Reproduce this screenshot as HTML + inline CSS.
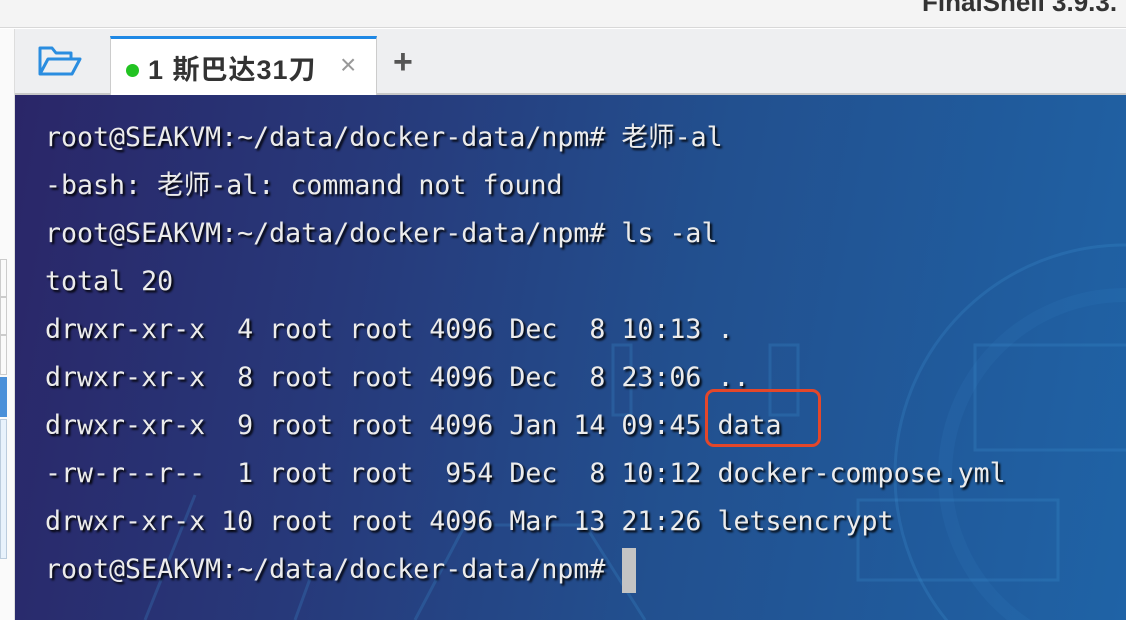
<!DOCTYPE html>
<html><head><meta charset="utf-8"><style>
*{margin:0;padding:0;box-sizing:border-box}
html,body{width:1126px;height:620px;overflow:hidden}
body{background:#fff;position:relative;font-family:"Liberation Sans","Noto Sans CJK SC",sans-serif}
.top{position:absolute;left:0;top:0;width:1126px;height:28px;background:#f4f4f4;border-bottom:1px solid #d8d8d8;overflow:hidden}
.top span{position:absolute;left:922px;top:-13px;font-size:26px;font-weight:bold;color:#333}
.tabbar{position:absolute;left:15px;top:29px;width:1111px;height:66px;background:#eeeff1;border-bottom:2px solid #c8c8c8}
.tab{position:absolute;left:95px;top:7px;width:267px;height:59px;background:#fff;border-top:3px solid #1e88e5;border-left:1px solid #ccc;border-right:1px solid #ccc}
.tab .dot{position:absolute;left:15px;top:25px;width:13px;height:13px;border-radius:50%;background:#22c322}
.tab .t{position:absolute;left:37px;top:9px;font-size:27px;font-weight:bold;color:#333;letter-spacing:1px}
.tab .x{position:absolute;left:229px;top:10px;font-size:28px;color:#999}
.plus{position:absolute;left:378px;top:14px;font-size:34px;font-weight:bold;color:#555}
.left{position:absolute;left:0;top:29px;width:15px;height:591px;background:#fafafa;border-right:1px solid #ddd}
.left i{position:absolute;left:0;width:7px;border:1px solid #ccc}
.term{position:absolute;left:15px;top:95px;width:1111px;height:525px;background:linear-gradient(100deg,#2a2668 0%,#27397a 30%,#22508f 60%,#1f63a6 100%);overflow:hidden}
pre{position:absolute;left:30px;top:19px;height:500px;overflow:hidden;font-family:"DejaVu Sans Mono","Noto Sans CJK SC",monospace;font-size:26.6px;line-height:48px;color:#ececec;text-shadow:2px 2px 2px #000}
.box{position:absolute;left:690px;top:294px;width:116px;height:58px;border:3px solid #e4472a;border-radius:9px}
.cur{position:absolute;left:607px;top:453px;width:14px;height:45px;background:#c4c4c4}
</style></head><body>
<div class="top"><span>FinalShell 3.9.3.</span></div>
<div class="left"><i style="top:230px;height:38px"></i><i style="top:268px;height:38px"></i><i style="top:306px;height:40px"></i><i style="top:348px;height:40px;background:#4a90d9;border-color:#4a90d9"></i><i style="top:390px;height:140px;background:#e8f2fc;border-color:#bcd"></i></div>
<div class="tabbar">
<svg style="position:absolute;left:22px;top:15px" width="46" height="34" viewBox="0 0 46 34"><path d="M3 30V4h12l4 5h15v6" fill="none" stroke="#2a8de0" stroke-width="3" stroke-linejoin="round"/><path d="M3 30l8-15h32l-8 15z" fill="none" stroke="#2a8de0" stroke-width="3" stroke-linejoin="round"/></svg>
<div class="tab"><div class="dot"></div><div class="t">1 斯巴达31刀</div><div class="x">×</div></div>
<div class="plus">+</div>
</div>
<div class="term">
<svg style="position:absolute;left:0;top:0" width="1111" height="525"><g fill="none" stroke="#3d8fd0" stroke-opacity=".25" stroke-width="3"><circle cx="1110" cy="380" r="230"/><circle cx="1110" cy="380" r="180" stroke-width="14" stroke-opacity=".12"/><rect x="960" y="250" width="160" height="105"/><rect x="755" y="250" width="28" height="70"/><rect x="598" y="250" width="18" height="70"/><rect x="843" y="405" width="200" height="80"/><path d="M130 525 180 400M280 525 300 470M400 525 450 430h120l60 95"/></g></svg>
<pre>root@SEAKVM:~/data/docker-data/npm# 老师-al
-bash: 老师-al: command not found
root@SEAKVM:~/data/docker-data/npm# ls -al
total 20
drwxr-xr-x  4 root root 4096 Dec  8 10:13 .
drwxr-xr-x  8 root root 4096 Dec  8 23:06 ..
drwxr-xr-x  9 root root 4096 Jan 14 09:45 data
-rw-r--r--  1 root root  954 Dec  8 10:12 docker-compose.yml
drwxr-xr-x 10 root root 4096 Mar 13 21:26 letsencrypt
root@SEAKVM:~/data/docker-data/npm# </pre>
<div class="box"></div>
<div class="cur"></div>
</div>
</body></html>
